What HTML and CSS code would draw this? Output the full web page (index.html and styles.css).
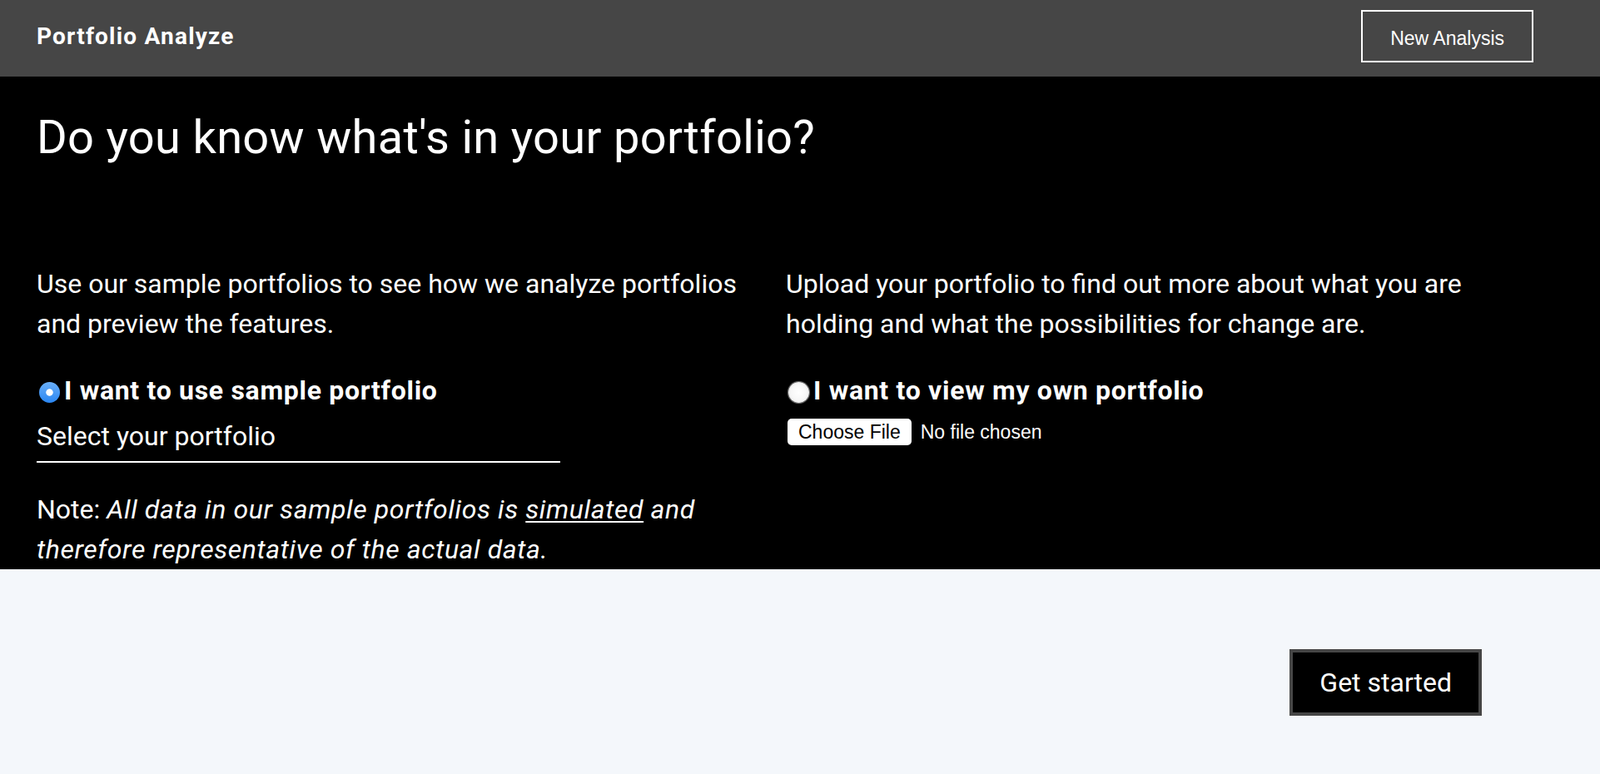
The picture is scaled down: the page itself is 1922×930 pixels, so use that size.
FILE: index.html
```html
<!DOCTYPE html>
<html lang="en">
<head>
<meta charset="utf-8">
<title>Portfolio Analyze</title>
<link rel="stylesheet" href="styles.css">
</head>
<body>
<header class="topbar">
  <div class="brand">Portfolio Analyze</div>
  <button class="btn-outline" type="button">New Analysis</button>
</header>
<section class="hero">
  <h1 class="hero-title">Do you know what's in your portfolio?</h1>
  <div class="columns">
    <div class="col">
      <p class="lead">Use our sample portfolios to see how we analyze portfolios and preview the features.</p>
      <label class="radio-row">
        <input class="radio" type="radio" name="source" checked>
        <span>I want to use sample portfolio</span>
      </label>
      <div class="select">Select your portfolio</div>
      <p class="note">Note: <em class="note-em">All data in our sample portfolios is <u class="ul">simulated</u> and therefore representative of the actual data.</em></p>
    </div>
    <div class="col">
      <p class="lead">Upload your portfolio to find out more about what you are holding and what the possibilities for change are.</p>
      <label class="radio-row">
        <input class="radio" type="radio" name="source">
        <span>I want to view my own portfolio</span>
      </label>
      <input class="file" type="file">
    </div>
  </div>
</section>
<section class="actions">
  <button class="btn-primary" type="button">Get started</button>
</section>
</body>
</html>
```

FILE: styles.css
```css
* { box-sizing: border-box; }
html, body { margin: 0; padding: 0; }
body {
  display: flex;
  flex-direction: column;
  min-height: 100vh;
  font-family: Roboto, "Liberation Sans", Arial, sans-serif;
  background: #f4f7fb;
  color: #fff;
}
.topbar {
  height: 92px;
  background: #464646;
  display: flex;
  align-items: center;
  justify-content: space-between;
  padding: 0 80px 5px 44px;
}
.brand {
  font-size: 28px;
  font-weight: 700;
  letter-spacing: 1.2px;
  line-height: 33px;
}
.btn-outline {
  height: 63px;
  padding: 19px 33px 14px;
  background: transparent;
  border: 2px solid #fff;
  color: #fff;
  font-family: "Liberation Sans", Arial, sans-serif;
  font-size: 23px;
  line-height: 26px;
  cursor: pointer;
}
.hero {
  background: #000;
  padding: 39px 0 0 44px;
}
.hero-title {
  margin: 0;
  font-size: 56px;
  font-weight: 400;
  letter-spacing: 0.3px;
  line-height: 68px;
}
.columns {
  margin-top: 118px;
  display: grid;
  grid-template-columns: 880px 880px;
  column-gap: 20px;
}
.lead {
  margin: 0;
  font-size: 32px;
  line-height: 48px;
}
.radio-row {
  margin-top: 32px;
  display: flex;
  align-items: center;
  font-size: 32px;
  font-weight: 700;
  letter-spacing: 0.7px;
  line-height: 48px;
}
.radio {
  appearance: none;
  -webkit-appearance: none;
  width: 25px;
  height: 25px;
  margin: 5px 5px 0 3px;
  border-radius: 50%;
  flex: none;
  background: radial-gradient(circle at 50% 50%, #ffffff 0, #f6f6f6 55%, #d9d9d9 100%);
  box-shadow: 0 0 1px 1px rgba(200,200,200,0.6);
}
.radio:checked {
  background:
    radial-gradient(circle at 50% 50%, #ffffff 0 3.8px, transparent 4.6px),
    linear-gradient(#6aaff8, #2a86f2);
  box-shadow: none;
}
.select {
  width: 629px;
  margin-top: 11px;
  padding-bottom: 10px;
  border-bottom: 2px solid #fff;
  font-size: 32px;
  line-height: 40px;
}
.note {
  margin: 32px 0 0;
  font-size: 32px;
  line-height: 48px;
}
.note-em {
  letter-spacing: 0.6px;
}
.ul {
  text-decoration-thickness: 2px;
  text-underline-offset: 3px;
}
.file {
  margin: 10px 0 0 2px;
  height: 32px;
  font-family: "Liberation Sans", Arial, sans-serif;
  font-size: 23px;
  color: #fff;
}
.file::file-selector-button {
  height: 32px;
  margin-right: 11px;
  padding: 0 13px;
  border: 0;
  border-radius: 5px;
  background: #fff;
  color: #000;
  font: inherit;
}
.actions {
  flex: 1;
  display: flex;
  justify-content: flex-end;
  align-items: flex-start;
  padding: 96px 142px 0 0;
}
.btn-primary {
  height: 80px;
  padding: 0 32px;
  background: #000;
  border: 4px solid #464646;
  color: #fff;
  font-family: Roboto, "Liberation Sans", Arial, sans-serif;
  font-size: 32px;
  line-height: 40px;
  cursor: pointer;
}
```
